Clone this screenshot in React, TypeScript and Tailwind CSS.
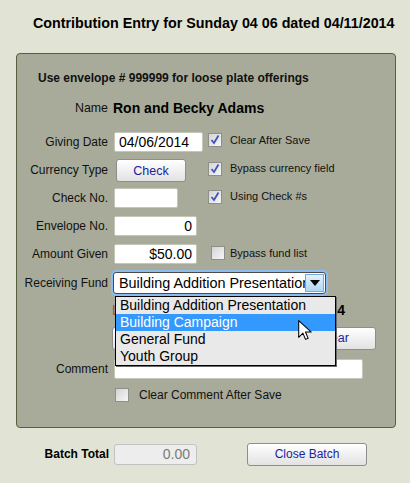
import { FC, ReactNode } from 'react';

const CheckBox: FC<{ checked?: boolean }> = ({ checked }) => (
  <span className="relative inline-block w-[14px] h-[14px] border border-[#8d8f88] bg-gradient-to-br from-[#d4d4d4] to-[#f6f6f6] shrink-0">
    {checked && (
      <svg viewBox="0 0 14 14" className="absolute -left-px -top-px w-[14px] h-[14px]">
        <path d="M3.5 7 L6 10 L10.5 2.5" fill="none" stroke="#3f55b8" strokeWidth="1.8" />
      </svg>
    )}
  </span>
);

const Label: FC<{ children: ReactNode }> = ({ children }) => (
  <span className="w-[91px] text-right text-[12px] text-[#111] shrink-0">{children}</span>
);

const Option: FC<{ checked?: boolean; text: string; className?: string }> = ({
  checked,
  text,
  className = '',
}) => (
  <span className={`flex items-center gap-2 ${className}`}>
    <CheckBox checked={checked} />
    <span className="text-[11px] text-[#111]">{text}</span>
  </span>
);

const Button: FC<{ children?: ReactNode; className?: string }> = ({ children, className = '' }) => (
  <button
    type="button"
    className={`h-[23px] rounded-[3px] border border-[#8e8e8e] bg-gradient-to-b from-white to-[#e2e2e2] text-[12.5px] text-[#1d1d9e] ${className}`}
  >
    {children}
  </button>
);

const TextBox: FC<{ value?: string; className?: string; right?: boolean }> = ({
  value = '',
  className = '',
  right,
}) => (
  <div
    className={`h-[20px] rounded-[2px] border border-[#c4c7b8] bg-white text-[14px] leading-[18px] px-[4px] text-black ${
      right ? 'text-right' : ''
    } ${className}`}
  >
    {value}
  </div>
);

const funds = ['Building Addition Presentation', 'Building Campaign', 'General Fund', 'Youth Group'];

export default function App() {
  return (
    <div className="w-[410px] h-[483px] bg-[#e1e4d4] font-['Liberation_Sans',Arial,sans-serif] overflow-hidden">
      <h1 className="pt-[14px] pl-[33px] text-[14.3px] font-bold leading-[18px] text-black">
        Contribution Entry for Sunday 04 06 dated 04/11/2014
      </h1>

      <div className="mt-[21px] ml-4 w-[380px] h-[375px] rounded-[4px] border border-[#56603f] bg-[#a8ab9a] pt-[16px]">
        <p className="pl-[21px] text-[12px] font-bold leading-[16px] text-[#111]">
          Use envelope # 999999 for loose plate offerings
        </p>
        <div className="mt-[13px] h-[18px] flex items-center">
          <span className="w-[91px] text-right text-[12.4px] text-[#111]">Name</span>
          <span className="ml-[5px] text-[14px] font-bold text-black">Ron and Becky Adams</span>
        </div>

        <div className="mt-[11px] h-[28px] flex items-center">
          <Label>Giving Date</Label>
          <div className="ml-[6px] w-[94px] shrink-0">
            <TextBox value="04/06/2014" className="w-[89px]" />
          </div>
          <Option checked text="Clear After Save" className="-mt-[4px]" />
        </div>

        <div className="h-[28px] flex items-center">
          <Label>Currency Type</Label>
          <div className="ml-[6px] w-[94px] shrink-0">
            <Button className="ml-[2px] w-[70px]">Check</Button>
          </div>
          <Option checked text="Bypass currency field" className="-mt-[3px]" />
        </div>

        <div className="h-[28px] flex items-center">
          <Label>Check No.</Label>
          <div className="ml-[6px] w-[94px] shrink-0">
            <TextBox className="w-[64px]" />
          </div>
          <Option checked text="Using Check #s" className="-mt-[3px]" />
        </div>

        <div className="h-[28px] flex items-center">
          <Label>Envelope No.</Label>
          <div className="ml-[6px] w-[94px] shrink-0">
            <TextBox value="0" right className="w-[83px]" />
          </div>
        </div>

        <div className="h-[28px] flex items-center">
          <Label>Amount Given</Label>
          <div className="ml-[6px] w-[94px] shrink-0">
            <TextBox value="$50.00" right className="w-[83px]" />
          </div>
          <Option text="Bypass fund list" className="ml-[3px] -mt-[2px] gap-[5px]" />
        </div>

        <div className="h-[30px] flex items-center">
          <Label>Receiving Fund</Label>
          <div className="relative ml-[5px]">
            <div className="w-[213px] h-[22px] flex rounded-[3px] border border-[#4a4a4a] bg-white ring-2 ring-[#8cbcef] overflow-hidden">
              <span className="flex-1 overflow-hidden whitespace-nowrap pl-[5px] text-[14.4px] leading-[20px] text-black">
                Building Addition Presentation
              </span>
              <span className="w-[19px] h-[18px] my-px mr-px flex items-center justify-center bg-gradient-to-b from-[#e4f2fd] to-[#acd6f5] border border-[#7aa9d6]">
                <svg viewBox="0 0 10 6" className="w-[10px] h-[6px]">
                  <path d="M0 0 H10 L5 6 Z" fill="#000" />
                </svg>
              </span>
            </div>

            <ul className="absolute left-[2px] top-[24px] z-10 w-[221px] border border-black bg-[#e9e9e9] shadow-[1px_1px_0_#6b6b6b]">
              {funds.map((f, i) => (
                <li
                  key={f}
                  className={`h-[17px] pl-[4px] text-[14px] leading-[17px] whitespace-nowrap ${
                    i === 1 ? 'bg-[#3399ff] text-white' : 'text-black'
                  }`}
                >
                  {f}
                </li>
              ))}
            </ul>

            <svg
              viewBox="0 0 13 21"
              className="absolute left-[185px] top-[48px] z-20 w-[14px] h-[22px] pointer-events-none"
            >
              <path
                d="M0.5 0.5 V16.5 L4.5 12.5 L7 18.5 L9.5 17.5 L7 11.5 H12.5 Z"
                fill="#fff"
                stroke="#000"
                strokeWidth="1"
                strokeLinejoin="round"
              />
            </svg>
          </div>
        </div>

        <div className="h-[24px] flex items-center">
          <div className="ml-[95px] w-[233px] flex justify-between text-[14px]">
            <span className="text-[#a0522d]">L</span>
            <span className="font-bold text-black">04/06/2014</span>
          </div>
        </div>

        <div className="h-[32px] flex items-center">
          <Button className="ml-[95px] w-[84px]">Save</Button>
          <Button className="ml-[96px] w-[84px]">Clear</Button>
        </div>

        <div className="h-[29px] flex items-center">
          <Label>Comment</Label>
          <div className="ml-[6px]">
            <TextBox className="w-[249px] h-[19px]" />
          </div>
        </div>

        <div className="h-[24px] flex items-center">
          <span className="ml-[98px] flex items-center gap-[10px]">
            <CheckBox />
            <span className="text-[12px] text-[#111]">Clear Comment After Save</span>
          </span>
        </div>
      </div>

      <div className="mt-[14px] h-[24px] flex items-center pl-4">
        <span className="w-[93px] text-right text-[12px] font-bold text-black">Batch Total</span>
        <div className="ml-[5px] w-[83px] h-[21px] rounded-[3px] border border-[#c2c2c2] bg-[#ededed] text-right pr-[6px] text-[14px] leading-[19px] text-[#7a7a7a]">
          0.00
        </div>
        <Button className="ml-[50px] w-[120px] !text-[12px]">Close Batch</Button>
      </div>
    </div>
  );
}
